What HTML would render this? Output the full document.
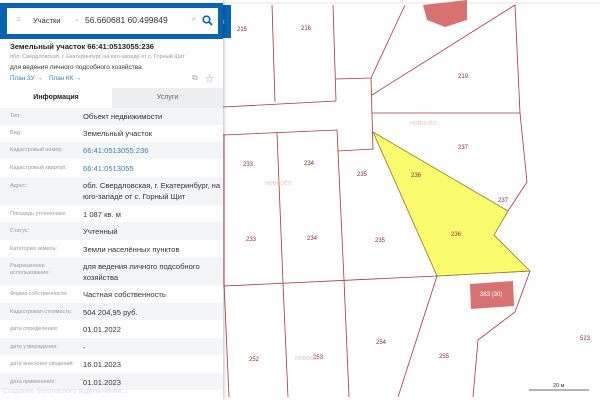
<!DOCTYPE html>
<html><head><meta charset="utf-8"><style>
*{margin:0;padding:0;box-sizing:border-box}
body{width:600px;height:400px;overflow:hidden;background:#fff;font-family:"Liberation Sans","Noto Sans CJK SC",sans-serif;position:relative}
#panel{position:absolute;left:0;top:0;width:223px;height:400px;background:#fff;box-shadow:1px 0 3px rgba(0,0,0,.25);z-index:2}
.search{position:absolute;left:0;top:3px;width:223px;height:36px;background:#0a63b0}
.inp{position:absolute;left:7px;top:5px;width:211px;height:26px;background:#fff;font-size:8px;color:#333}
.abs{position:absolute;white-space:nowrap}
.row{position:absolute;left:0;width:223px}
.row.g{background:#f4f5f7}
.lab{position:absolute;left:10px;font-size:5.5px;color:#999;line-height:7px}
.val{position:absolute;left:83px;font-size:7.6px;color:#333;line-height:11px}
.lnk{color:#3a7fb0}
svg text{font-family:"Liberation Sans",sans-serif;font-size:6px;fill:#8a2a2a}
</style></head><body>
<div id="panel">
 <div class="search"><div class="inp">
  <span class="abs" style="left:9px;top:6px;color:#ccc;font-size:9px">≡</span>
  <span class="abs" style="left:26px;top:8px;font-size:7.5px">Участки</span>
  <span class="abs" style="left:67px;top:7px;color:#aaa;font-size:7px">⌄</span>
  <span class="abs" style="left:78px;top:7px;font-size:8.5px">56.660681 60.499849</span>
  <span class="abs" style="left:184px;top:6px;color:#bbb;font-size:9px">×</span>
  <svg class="abs" style="left:195px;top:7px" width="11" height="11"><circle cx="4.5" cy="4.5" r="3.3" fill="none" stroke="#0a63b0" stroke-width="1.6"/><path d="M7 7l3 3" stroke="#0a63b0" stroke-width="1.8"/></svg>
 </div></div>
 <div class="abs" style="left:10px;top:42px;font-size:7.6px;font-weight:bold;color:#222">Земельный участок 66:41:0513055:236</div>
 <div class="abs" style="left:10px;top:54px;font-size:5.5px;color:#999">обл. Свердловская, г. Екатеринбург, на юго-западе от с. Горный Щит</div>
 <div class="abs" style="left:10px;top:64px;font-size:6.5px;color:#333">для ведения личного подсобного хозяйства</div>
 <div class="abs lnk" style="left:10px;top:75px;font-size:6.3px">План ЗУ →</div>
 <div class="abs lnk" style="left:49px;top:75px;font-size:6.3px">План КК →</div>
 <div class="abs" style="left:192px;top:73px;font-size:8px;color:#aaa">⧉</div>
 <div class="abs" style="left:205px;top:72px;font-size:9px;color:#aaa">☆</div>
 <div class="abs" style="left:0;top:88px;width:112px;height:20px;background:#fff;font-size:7px;font-weight:bold;color:#222;text-align:center;line-height:20px">Информация</div>
 <div class="abs" style="left:112px;top:88px;width:111px;height:20px;background:#eceef0;font-size:7px;color:#666;text-align:center;line-height:20px">Услуги</div>

 <div class="row g" style="top:108px;height:17px"><span class="lab" style="top:5px">Тип:</span><span class="val" style="top:3px">Объект недвижимости</span></div>
 <div class="row" style="top:125px;height:17px"><span class="lab" style="top:5px">Вид:</span><span class="val" style="top:3px">Земельный участок</span></div>
 <div class="row g" style="top:142px;height:17px"><span class="lab" style="top:5px">Кадастровый номер:</span><span class="val lnk" style="top:3px;color:#3a7fb0">66:41:0513055:236</span></div>
 <div class="row" style="top:159px;height:18px"><span class="lab" style="top:6px">Кадастровый квартал:</span><span class="val lnk" style="top:4px;color:#3a7fb0">66:41:0513055</span></div>
 <div class="row g" style="top:177px;height:28px"><span class="lab" style="top:6px">Адрес:</span><span class="val" style="top:3px">обл. Свердловская, г. Екатеринбург, на<br>юго-западе от с. Горный Щит</span></div>
 <div class="row" style="top:205px;height:17px"><span class="lab" style="top:6px">Площадь уточненная:</span><span class="val" style="top:4px">1 087 кв. м</span></div>
 <div class="row g" style="top:222px;height:18px"><span class="lab" style="top:6px">Статус:</span><span class="val" style="top:4px">Учтенный</span></div>
 <div class="row" style="top:240px;height:17px"><span class="lab" style="top:6px">Категория земель:</span><span class="val" style="top:4px">Земли населённых пунктов</span></div>
 <div class="row g" style="top:257px;height:28px"><span class="lab" style="top:6px">Разрешенное<br>использование:</span><span class="val" style="top:4px">для ведения личного подсобного<br>хозяйства</span></div>
 <div class="row" style="top:285px;height:18px"><span class="lab" style="top:6px">Форма собственности:</span><span class="val" style="top:4px">Частная собственность</span></div>
 <div class="row g" style="top:303px;height:17px"><span class="lab" style="top:6px">Кадастровая стоимость:</span><span class="val" style="top:4px">504 204,95 руб.</span></div>
 <div class="row" style="top:320px;height:18px"><span class="lab" style="top:6px">дата определения:</span><span class="val" style="top:4px">01.01.2022</span></div>
 <div class="row g" style="top:338px;height:17px"><span class="lab" style="top:6px">дата утверждения:</span><span class="val" style="top:4px">-</span></div>
 <div class="row" style="top:355px;height:18px"><span class="lab" style="top:6px">дата внесения сведений:</span><span class="val" style="top:4px">16.01.2023</span></div>
 <div class="row g" style="top:373px;height:17px"><span class="lab" style="top:6px">дата применения:</span><span class="val" style="top:4px">01.01.2023</span></div>
 <div class="abs" style="left:3px;top:388px;font-size:7px;color:#ddd">Создание безопасного подключения...</div>
</div>

<svg style="position:absolute;left:0;top:0" width="600" height="400">
 <line x1="223" y1="3" x2="600" y2="3" stroke="#e6e6e6"/>
 <g fill="none" stroke="#a03a3a" stroke-width="0.8">
  <polyline points="272,5 275,102"/>
  <polyline points="333,5 336,101"/>
  <polyline points="223,107 336,101"/>
  <polyline points="336,79 371,78 405,5"/>
  <polyline points="372,95 515,5 520,113 527,182 508,211"/>
  <polyline points="372,113 520,113"/>
  <polyline points="371,78 373,150"/>
  <polyline points="223,135 337,130 338,151 373,149"/>
  <polyline points="277,133 283,283 288,397"/>
  <polyline points="338,151 344,280 349,397"/>
  <polyline points="224,135 224,283 229,397"/>
  <polyline points="224,286 437,276 530,271"/>
  <polyline points="437,276 398,397"/>
  <polyline points="530,271 515,312 478,340 473,397"/>
 </g>
 <polygon points="373,132 508,211 494,235 530,271 437,276" fill="#fbfb6e" stroke="#8a7a20" stroke-width="0.8"/>
 <polygon points="470,284 513,281 514,306 471,309" fill="#d87272"/>
 <polygon points="423,5 467,0 467,20 445,27 427,20" fill="#d87272"/>
 <text x="480" y="296" style="fill:#fff;font-size:6px">363 (30)</text>
 <rect x="220" y="5" width="11" height="33" fill="#0a63b0"/>
 <text x="222" y="24" style="fill:#fff;font-size:8px">‹</text>
 <text x="237" y="31">215</text><text x="301" y="30">216</text><text x="458" y="78">219</text>
 <text x="458" y="149">237</text><text x="243" y="166">233</text><text x="304" y="165">234</text>
 <text x="357" y="176">235</text><text x="411" y="177">236</text><text x="498" y="202">237</text>
 <text x="246" y="241">233</text><text x="307" y="240">234</text><text x="375" y="242">235</text>
 <text x="451" y="236">236</text><text x="376" y="344">254</text><text x="249" y="361">252</text>
 <text x="313" y="359">253</text><text x="439" y="358">255</text><text x="580" y="340">523</text>
 <line x1="529" y1="390" x2="589" y2="390" stroke="#333" stroke-width="0.8"/>
 <text x="553" y="387" style="fill:#333;font-size:5.5px">20 м</text>
 <text x="410" y="125" style="fill:#e9c7c7;font-size:7px">новосёл</text>
 <text x="265" y="185" style="fill:#e9c7c7;font-size:7px">новосёл</text>
 <text x="295" y="360" style="fill:#e9c7c7;font-size:7px">новосёл</text>
</svg>
</body></html>
